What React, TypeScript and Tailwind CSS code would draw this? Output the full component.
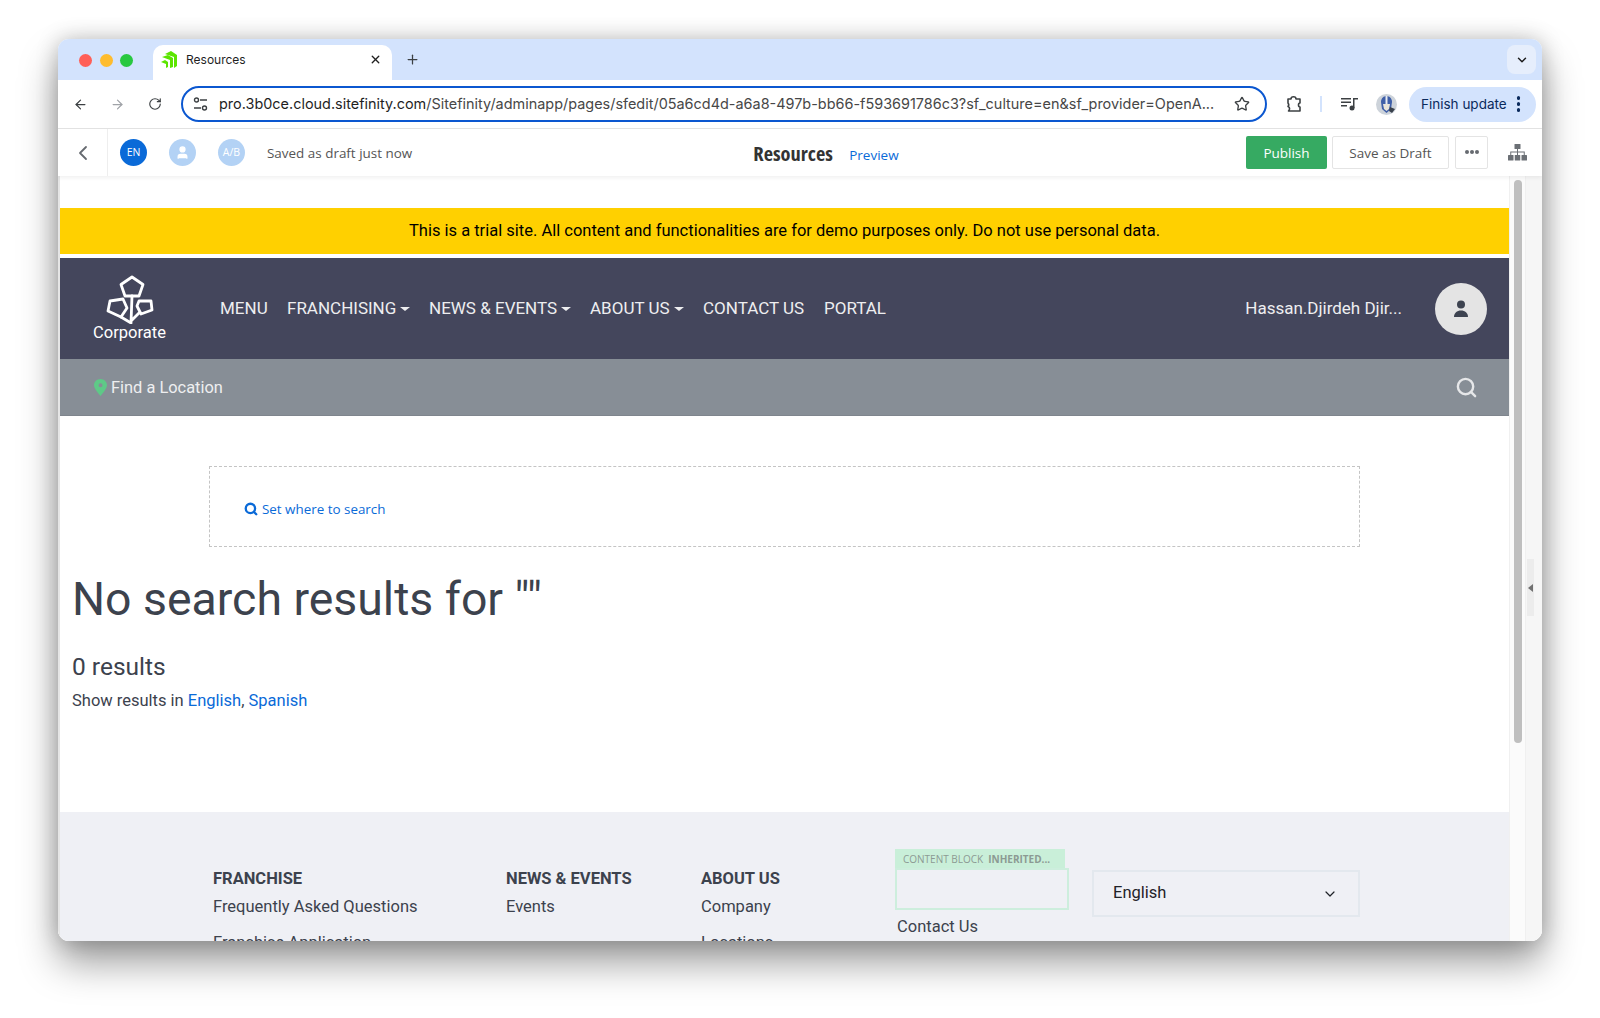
import React from 'react';
import { ArrowLeft, ArrowRight, RotateCw, Star, ChevronDown, ChevronLeft, X, Plus, Search, User } from 'lucide-react';

const navItems = [
  { label: 'MENU', caret: false, width: 'w-[47px]' },
  { label: 'FRANCHISING', caret: true, width: 'w-[122px]' },
  { label: 'NEWS & EVENTS', caret: true, width: 'w-[141px]' },
  { label: 'ABOUT US', caret: true, width: 'w-[93px]' },
  { label: 'CONTACT US', caret: false, width: 'w-[101px]' },
  { label: 'PORTAL', caret: false, width: 'w-[62px]' },
];

const FooterColumn = ({ title, items, width }: { title: string; items: string[]; width: string }) => (
  <div className={`${width} shrink-0 pt-[57px]`}>
    <p className="text-[16.500px] leading-[20px] font-bold text-[#3c424d]">{title}</p>
    {items.map((item) => (
      <p key={item} className="text-[16.500px] leading-[20px] mt-[8px] mb-[16px] text-[#3c424d]">{item}</p>
    ))}
  </div>
);

const Logo = () => (
  <svg width="48" height="49" viewBox="0 0 48 49" fill="none" stroke="white" strokeWidth="2.800" strokeLinejoin="round" strokeLinecap="round">
    <path d="M26 2l11 7.500-4 11.500H19L15 9.500z" />
    <path d="M4 26l13-2 4 9-6 9-13-6z" />
    <path d="M33 26h12l1 9-11 4-4-8z" />
    <path d="M26 21l-1 27M15 42l10 6M33 38l-8 8" />
  </svg>
);

const Favicon = () => (
  <svg width="16" height="17" viewBox="0 0 16 17" fill="#5ce500">
    <path d="M4 3l6-3 6 4v11l-3 2V6z" />
    <path d="M1 6l6-2 5 3v9l-3 1V9z" />
    <path d="M0 11l4-2 3 2v5l-2 1v-4z" />
  </svg>
);

const Tune = () => (
  <svg width="15" height="15" viewBox="0 0 15 15" fill="none" stroke="#3c4043" strokeWidth="1.400">
    <circle cx="3.500" cy="3" r="2" />
    <path d="M7 3h7M1 11h7" />
    <circle cx="11.500" cy="11" r="2" />
  </svg>
);

const Extension = () => (
  <svg width="18" height="18" viewBox="0 0 18 18" fill="none" stroke="#3c4043" strokeWidth="1.600" strokeLinejoin="round">
    <path d="M3 4h3c0-3 5-3 5 0h4v4c-2 0-2 4 0 4v4H3.500c1.500-1.500 1.500-4-.5-4.500 0 0 1.500-1.500 0-3.500z" />
  </svg>
);

const MediaIcon = () => (
  <svg width="17" height="14" viewBox="0 0 17 14" fill="#3c4043">
    <rect x="0" y="1" width="10" height="1.500" />
    <rect x="0" y="4.500" width="10" height="1.500" />
    <rect x="0" y="8" width="6" height="1.500" />
    <rect x="12" y="1" width="1.500" height="10" />
    <rect x="12" y="1" width="5" height="1.500" />
    <circle cx="11" cy="11" r="2.500" />
  </svg>
);

const ProfileImage = () => (
  <svg width="21" height="21" viewBox="0 0 21 21">
    <circle cx="10.500" cy="10.500" r="10.500" fill="#cdd3da" />
    <path d="M5 8c0-4 3-6 5.500-6S16 4 16 8l-1 7-4.500 4L6 15z" fill="#3f5fa8" />
    <path d="M9.500 2h2v8h-2z" fill="#e8ecf2" />
    <path d="M7 10h7l-1 5-2.500 2L8 15z" fill="#e8e4da" />
    <path d="M14 13l5 2-3 4-3-2z" fill="#39414c" />
  </svg>
);

const Hierarchy = () => (
  <svg width="19" height="17" viewBox="0 0 19 17" fill="#6b6f75">
    <rect x="6.500" y="0" width="6" height="5" rx="0.500" />
    <rect x="0" y="11" width="5.500" height="5.500" rx="0.500" />
    <rect x="6.750" y="11" width="5.500" height="5.500" rx="0.500" />
    <rect x="13.500" y="11" width="5.500" height="5.500" rx="0.500" />
    <path d="M9 5h1v2.500h6.750V11h-1V8.500H10V11H9V8.500H3.250V11h-1V7.500H9z" />
  </svg>
);

export default function App() {
  return (
    <div className="w-[1600px] h-[1018px] bg-white overflow-hidden pt-[39px] pl-[58px]">
      <div className="w-[1484px] h-[902px] rounded-[11px] overflow-hidden flex flex-col bg-white shadow-[0_22px_38px_rgba(0,0,0,0.38),0_0_22px_rgba(0,0,0,0.22)] font-['Inter',sans-serif]">
        {/* tab strip */}
        <div className="h-[41px] shrink-0 bg-[#d3e3fd] flex items-start">
          <div className="flex items-center gap-[7.500px] pl-[21px] pt-[15px] w-[95px]">
            <span className="w-[13px] h-[13px] rounded-full bg-[#ff5f57]" />
            <span className="w-[13px] h-[13px] rounded-full bg-[#febc2e]" />
            <span className="w-[13px] h-[13px] rounded-full bg-[#28c840]" />
          </div>
          <div className="mt-[6px] h-[35px] w-[239px] bg-white rounded-t-[10px] flex items-center pl-[8px] pr-[10px] pb-[6px]">
            <Favicon />
            <span className="ml-[9px] text-[12px] text-[#1f1f1f]">Resources</span>
            <X className="ml-auto w-[13px] h-[13px] text-[#1f1f1f]" strokeWidth={2.500} />
          </div>
          <Plus className="ml-[13px] mt-[13px] w-[15px] h-[15px] text-[#3c4043]" strokeWidth={2} />
          <div className="ml-auto mr-[6px] mt-[6px] w-[29px] h-[29px] rounded-[8px] bg-[#e6eefc] flex items-center justify-center">
            <ChevronDown className="w-[14px] h-[14px] text-[#1f1f1f]" strokeWidth={2.500} />
          </div>
        </div>

        {/* browser toolbar */}
        <div className="h-[49px] shrink-0 bg-white border-b border-[#e3e3e3] flex items-center">
          <ArrowLeft className="ml-[15px] w-[15px] h-[15px] text-[#3c4043]" strokeWidth={2} />
          <ArrowRight className="ml-[22px] w-[15px] h-[15px] text-[#a0a3a8]" strokeWidth={2} />
          <RotateCw className="ml-[23px] w-[14px] h-[14px] text-[#3c4043]" strokeWidth={2} />
          <div className="ml-[19px] w-[1086px] h-[36px] rounded-full border-2 border-[#0b57d0] flex items-center pl-[10px] pr-[15px]">
            <Tune />
            <span className="ml-[11px] text-[14.450px] text-[#1f1f1f] whitespace-nowrap">
              pro.3b0ce.cloud.sitefinity.com<span className="text-[#474747]">/Sitefinity/adminapp/pages/sfedit/05a6cd4d-a6a8-497b-bb66-f593691786c3?sf_culture=en&amp;sf_provider=OpenA...</span>
            </span>
            <Star className="ml-auto w-[16px] h-[16px] text-[#3c4043]" strokeWidth={2} />
          </div>
          <div className="ml-[18px]"><Extension /></div>
          <span className="ml-[17px] w-[2px] h-[16px] bg-[#d3e3fd]" />
          <div className="ml-[19px]"><MediaIcon /></div>
          <div className="ml-[18px]"><ProfileImage /></div>
          <div className="ml-[12px] w-[127px] h-[35px] rounded-full bg-[#d3e3fd] flex items-center pl-[12px]">
            <span className="text-[13.500px] text-[#0a2a5c] whitespace-nowrap">Finish update</span>
            <div className="ml-[10px] flex flex-col gap-[2.500px]">
              <span className="w-[3.500px] h-[3.500px] rounded-full bg-[#0a2a5c]" />
              <span className="w-[3.500px] h-[3.500px] rounded-full bg-[#0a2a5c]" />
              <span className="w-[3.500px] h-[3.500px] rounded-full bg-[#0a2a5c]" />
            </div>
          </div>
        </div>

        {/* editor bar */}
        <div className="relative z-10 h-[47px] shrink-0 bg-white shadow-[0_2px_4px_rgba(0,0,0,0.06)] flex items-center font-['Open_Sans',sans-serif]">
          <div className="w-[50px] h-full border-r border-[#eeeeee] flex items-center justify-center">
            <ChevronLeft className="w-[24px] h-[24px] text-[#666a70]" strokeWidth={1.800} />
          </div>
          <div className="ml-[12px] w-[27px] h-[27px] rounded-full bg-[#0a6ad8] flex items-center justify-center text-[10.500px] text-white">EN</div>
          <div className="ml-[22px] w-[27px] h-[27px] rounded-full bg-[#b3d2f5] flex items-center justify-center">
            <User className="w-[15px] h-[15px] text-white fill-white" />
          </div>
          <div className="ml-[22px] w-[27px] h-[27px] rounded-full bg-[#b3d2f5] flex items-center justify-center text-[10.500px] text-white">A/B</div>
          <span className="ml-[22px] mt-[1px] text-[13.450px] text-[#555555]">Saved as draft just now</span>
          <span className="ml-[341px] mt-[2px] w-[82px] text-[20.400px] font-bold text-[#333333] [font-stretch:75%] whitespace-nowrap">Resources</span>
          <span className="ml-[14px] mt-[5px] text-[13.500px] text-[#0a6ad8]">Preview</span>
          <button className="ml-auto w-[81px] h-[33px] rounded-[2px] bg-[#36aa62] text-[13.500px] text-white pt-[1px]">Publish</button>
          <button className="ml-[5px] w-[117px] h-[33px] rounded-[2px] border border-[#e4e4e4] text-[13.500px] text-[#555555] pt-[1px]">Save as Draft</button>
          <button className="ml-[6px] w-[33px] h-[33px] rounded-[2px] border border-[#e4e4e4] flex items-center justify-center gap-[1px] pb-[2px]">
            <span className="w-[4px] h-[4px] rounded-full bg-[#666a70]" />
            <span className="w-[4px] h-[4px] rounded-full bg-[#666a70]" />
            <span className="w-[4px] h-[4px] rounded-full bg-[#666a70]" />
          </button>
          <div className="ml-[20px] mr-[15px]"><Hierarchy /></div>
        </div>

        {/* page + scrollbars */}
        <div className="flex-1 min-h-0 flex border-l-2 border-[#e5e5e5] bg-white">
          <div className="w-[1449px] shrink-0 overflow-hidden font-['Roboto',sans-serif]">
            <div className="h-[32px]" />
            <div className="h-[46px] bg-[#ffd000] flex items-center justify-center text-[16.500px] text-black">
              This is a trial site. All content and functionalities are for demo purposes only. Do not use personal data.
            </div>
            <div className="h-[4px]" />
            <div className="h-[101px] bg-[#44465c] flex items-center text-white">
              <div className="w-[160px] pl-[33px] flex flex-col items-center pr-[54px] shrink-0">
                <Logo />
                <span className="-mt-[1px] text-[16.500px] leading-[20px] whitespace-nowrap">Corporate</span>
              </div>
              <div className="flex items-center gap-[20px] text-[17px] text-[#eeeef0]">
                {navItems.map((item) => (
                  <span key={item.label} className={`${item.width} flex items-center whitespace-nowrap`}>
                    {item.label}
                    {item.caret && <span className="ml-[4px] w-0 h-0 border-x-[5px] border-x-transparent border-t-[4px] border-t-[#eeeef0]" />}
                  </span>
                ))}
              </div>
              <span className="ml-auto text-[17px] text-[#eeeef0] whitespace-nowrap">Hassan.Djirdeh Djir...</span>
              <div className="ml-[33px] mr-[22px] w-[52px] h-[52px] rounded-full bg-[#e4e4e4] flex items-center justify-center">
                <svg width="16" height="18" viewBox="0 0 16 18" fill="#3d4350">
                  <circle cx="8" cy="4.500" r="4" />
                  <path d="M1 17c0-4 3-6.500 7-6.500s7 2.500 7 6.500z" />
                </svg>
              </div>
            </div>
            <div className="h-[57px] bg-[#878e96] border-b border-[#7f858d] flex items-center pl-[34px] text-[16.400px] text-[#eeeef0]">
              <svg width="13" height="17" viewBox="0 0 13 17" className="mr-[4px]">
                <path fillRule="evenodd" fill="#5ec987" d="M6.500 0C3 0 0 2.800 0 6.300 0 10 6.500 17 6.500 17S13 10 13 6.300C13 2.800 10 0 6.500 0zm0 8.300a2 2 0 1 1 0-4 2 2 0 0 1 0 4z" />
              </svg>
              <span className="mt-[3px]">Find a Location</span>
              <Search className="ml-auto mr-[31px] w-[23px] h-[23px] text-[#e6e7e9]" strokeWidth={2.500} />
            </div>

            <div className="h-[346px] pl-[12px]">
              <div className="ml-[137px] mt-[50px] w-[1151px] h-[81px] border border-dashed border-[#c4c4c4] flex items-center pl-[34px] pt-[5px] font-['Open_Sans',sans-serif] text-[13.400px] text-[#0a6ad8]">
                <Search className="w-[14px] h-[14px] mr-[4px]" strokeWidth={4} />
                Set where to search
              </div>
              <h1 className="mt-[24px] text-[46.400px] leading-[56px] text-[#3c424d]">No search results for ""</h1>
              <p className="mt-[25px] text-[24.500px] leading-[29px] text-[#3c424d]">0 results</p>
              <p className="mt-[7.500px] text-[16.500px] leading-[24px] text-[#3c424d]">
                Show results in <span className="text-[#0a6ad8]">English</span>, <span className="text-[#0a6ad8]">Spanish</span>
              </p>
            </div>

            <div className="h-[130px] bg-[#eff0f5] flex pl-[153px]">
              <FooterColumn title="FRANCHISE" width="w-[293px]" items={['Frequently Asked Questions', 'Franchise Application']} />
              <FooterColumn title="NEWS & EVENTS" width="w-[195px]" items={['Events']} />
              <FooterColumn title="ABOUT US" width="w-[194px]" items={['Company', 'Locations']} />
              <div className="w-[197px] shrink-0 pt-[37px]">
                <div className="w-[170px] h-[20px] bg-[#c9efd9] flex items-center pl-[8px] font-['Open_Sans',sans-serif] text-[10px] text-[#8c9a93] whitespace-nowrap">
                  CONTENT BLOCK <span className="ml-[5px] font-bold">INHERITED...</span>
                </div>
                <div className="-mt-[1px] w-[174px] h-[42px] border-2 border-[#cdeedd]" />
                <p className="mt-[7px] ml-[2px] text-[16.500px] leading-[20px] text-[#3c424d]">Contact Us</p>
              </div>
              <div className="mt-[58px] w-[268px] h-[47px] border-2 border-[#e3e8ee] flex items-center justify-between pl-[19px] pr-[20px] text-[16.500px] text-[#1f2228]">
                English
                <ChevronDown className="w-[16px] h-[16px]" strokeWidth={1.800} />
              </div>
            </div>
          </div>

          {/* scrollbar track and side handle */}
          <div className="flex-1 flex bg-[#f6f6f6]">
            <div className="w-[17px] bg-[#fbfbfb] border-x border-[#f0f0f0] pl-[4px] pt-[4px]">
              <div className="w-[8px] h-[563px] rounded-full bg-[#bfbfbf]" />
            </div>
            <div className="ml-[1px] mt-[383px] w-[7px] h-[57px] bg-[#ececec] flex items-center justify-center">
              <span className="w-0 h-0 border-y-[4px] border-y-transparent border-r-[5px] border-r-[#707070]" />
            </div>
          </div>
        </div>
      </div>
    </div>
  );
}
